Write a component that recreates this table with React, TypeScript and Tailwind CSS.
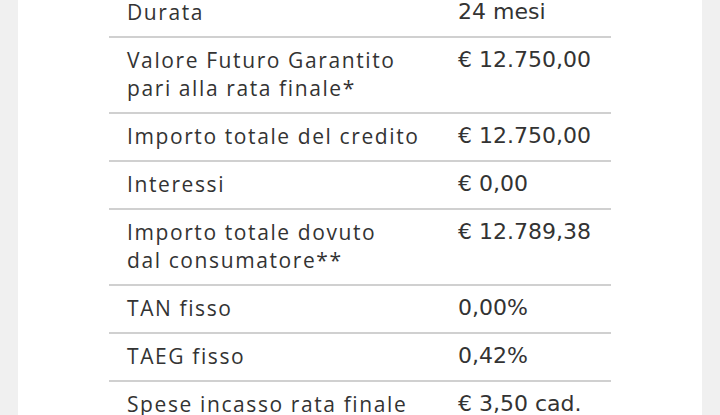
import React from "react";

const rows: { label: string[]; value: string }[] = [
  { label: ["Durata"], value: "24 mesi" },
  { label: ["Valore Futuro Garantito", "pari alla rata finale*"], value: "€ 12.750,00" },
  { label: ["Importo totale del credito"], value: "€ 12.750,00" },
  { label: ["Interessi"], value: "€ 0,00" },
  { label: ["Importo totale dovuto", "dal consumatore**"], value: "€ 12.789,38" },
  { label: ["TAN fisso"], value: "0,00%" },
  { label: ["TAEG fisso"], value: "0,42%" },
  { label: ["Spese incasso rata finale"], value: "€ 3,50 cad." },
];

export default function App() {
  return (
    <div className="w-[720px] h-[415px] overflow-hidden bg-[#f0f0f0] px-[18px]">
      <div className="flex h-full flex-col overflow-hidden bg-white px-[91px]">
        <div className="-mt-[10px]">
          {rows.map((r, i) => (
            <div
              key={i}
              className="flex border-b-2 border-[#d0d0d0] pt-[8px] pb-[10px] text-[#333333]"
            >
              <div
                className="w-[349px] shrink-0 pl-[18px] text-[21px] leading-[28px] tracking-[1.6px]"
                style={{ fontFamily: '"Open Sans", sans-serif' }}
              >
                {r.label.map((l, j) => (
                  <div key={j}>{l}</div>
                ))}
              </div>
              <div
                className="text-[22px] leading-[28px]"
                style={{ fontFamily: '"DejaVu Sans", Verdana, sans-serif' }}
              >
                {r.value}
              </div>
            </div>
          ))}
        </div>
      </div>
    </div>
  );
}
